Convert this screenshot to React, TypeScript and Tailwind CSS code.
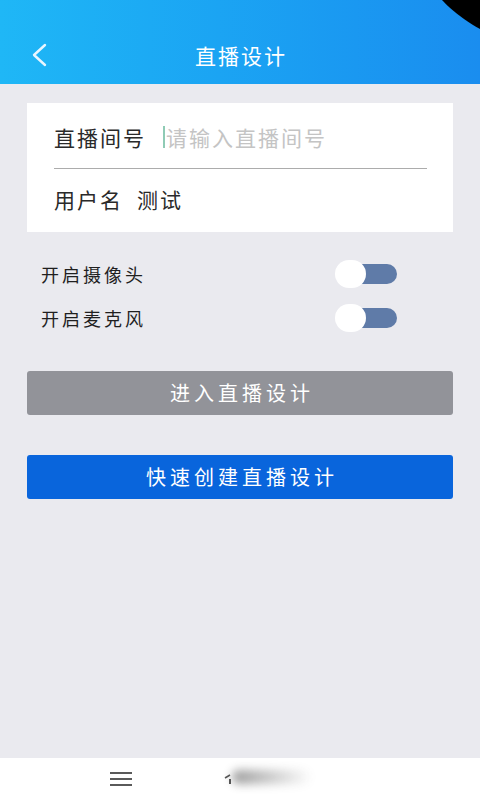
import React from "react";

function Toggle() {
  return (
    <div className="relative w-[62px] h-[28px] flex items-center">
      <div className="absolute right-0 w-[46px] h-[20px] rounded-full bg-[#5f7ba8]" />
      <div className="absolute left-0 w-[31px] h-[28px] rounded-full bg-white" />
    </div>
  );
}

export default function App() {
  return (
    <div
      className="relative w-[480px] h-[800px] overflow-hidden flex flex-col bg-[#eaeaef]"
      style={{ fontFamily: '"Noto Sans CJK SC", "Noto Sans", sans-serif' }}
    >
      {/* Header */}
      <div className="h-[84px] shrink-0 bg-gradient-to-r from-[#1fb7f6] to-[#1a8def] flex items-end pb-[11px] relative">
        <div className="w-full h-[36px] flex items-center relative">
          <svg className="absolute left-[30px] top-[6px]" width="18" height="24" viewBox="0 0 18 24">
            <path d="M15 2 L4 12 L15 22" fill="none" stroke="#e8f6ff" strokeWidth="2.4" strokeLinecap="round" strokeLinejoin="round" />
          </svg>
          <div className="flex-1 text-center text-white text-[21px] tracking-[2px] pl-[2px] leading-none">直播设计</div>
        </div>
      </div>

      {/* Card */}
      <div className="mx-[27px] mt-[19px] bg-white pl-[27px] pr-[26px] flex flex-col">
        <div className="h-[66px] flex items-end pb-[20px] border-b border-[#acacac] text-[21px] tracking-[2px] leading-none">
          <span className="text-[#2a2a2a]">直播间号</span>
          <span className="ml-[17px] w-[2px] h-[22px] bg-[#8fcbb5]" />
          <span className="text-[#c4c4c4] ml-[1px]">请输入直播间号</span>
        </div>
        <div className="h-[63px] flex items-center pb-[2px] text-[21px] tracking-[2px] leading-none text-[#2a2a2a]">
          <span>用户名</span>
          <span className="ml-[14px]">测试</span>
        </div>
      </div>

      {/* Toggles */}
      <div className="mt-[28px] pl-[41px] pr-[83px] flex flex-col gap-[16px]">
        <div className="flex items-center justify-between h-[28px]">
          <span className="text-[18px] tracking-[3px] text-[#1f1f1f] leading-none">开启摄像头</span>
          <Toggle />
        </div>
        <div className="flex items-center justify-between h-[28px]">
          <span className="text-[18px] tracking-[3px] text-[#1f1f1f] leading-none">开启麦克风</span>
          <Toggle />
        </div>
      </div>

      {/* Buttons */}
      <div className="mx-[27px] mt-[39px] h-[44px] rounded-[3px] bg-[#929399] flex items-center justify-center text-white text-[20px] tracking-[4px] pl-[4px]">
        进入直播设计
      </div>
      <div className="mx-[27px] mt-[40px] h-[44px] rounded-[3px] bg-[#0965dc] flex items-center justify-center text-white text-[20px] tracking-[4px] pl-[4px]">
        快速创建直播设计
      </div>

      <div className="flex-1" />

      {/* Bottom nav */}
      <div className="h-[42px] shrink-0 bg-white relative">
        <div className="absolute left-[110px] top-[14px] w-[22px] flex flex-col gap-[4px]">
          <div className="h-[2px] bg-[#5a5a5a]" />
          <div className="h-[2px] bg-[#5a5a5a]" />
          <div className="h-[2px] bg-[#5a5a5a]" />
        </div>
        <svg className="absolute left-[224px] top-[15px]" width="12" height="12" viewBox="0 0 12 12">
          <path d="M1 5 L6 2" stroke="#555" strokeWidth="1.5" fill="none" />
          <path d="M6 6 L6 11" stroke="#555" strokeWidth="2" fill="none" />
        </svg>
      </div>

      {/* Overlays: corner and page-curl artifacts */}
      <svg className="absolute right-0 top-0" width="38" height="30" viewBox="0 0 38 30">
        <path d="M0 0 L38 0 L38 29 Q32 26 22 19 Q8 9 0 0 Z" fill="#000" />
      </svg>
      <div className="absolute left-[232px] top-[770px] w-[80px] h-[14px] rounded-full bg-gradient-to-r from-[#555] to-transparent opacity-60 blur-[5px]" />
    </div>
  );
}
